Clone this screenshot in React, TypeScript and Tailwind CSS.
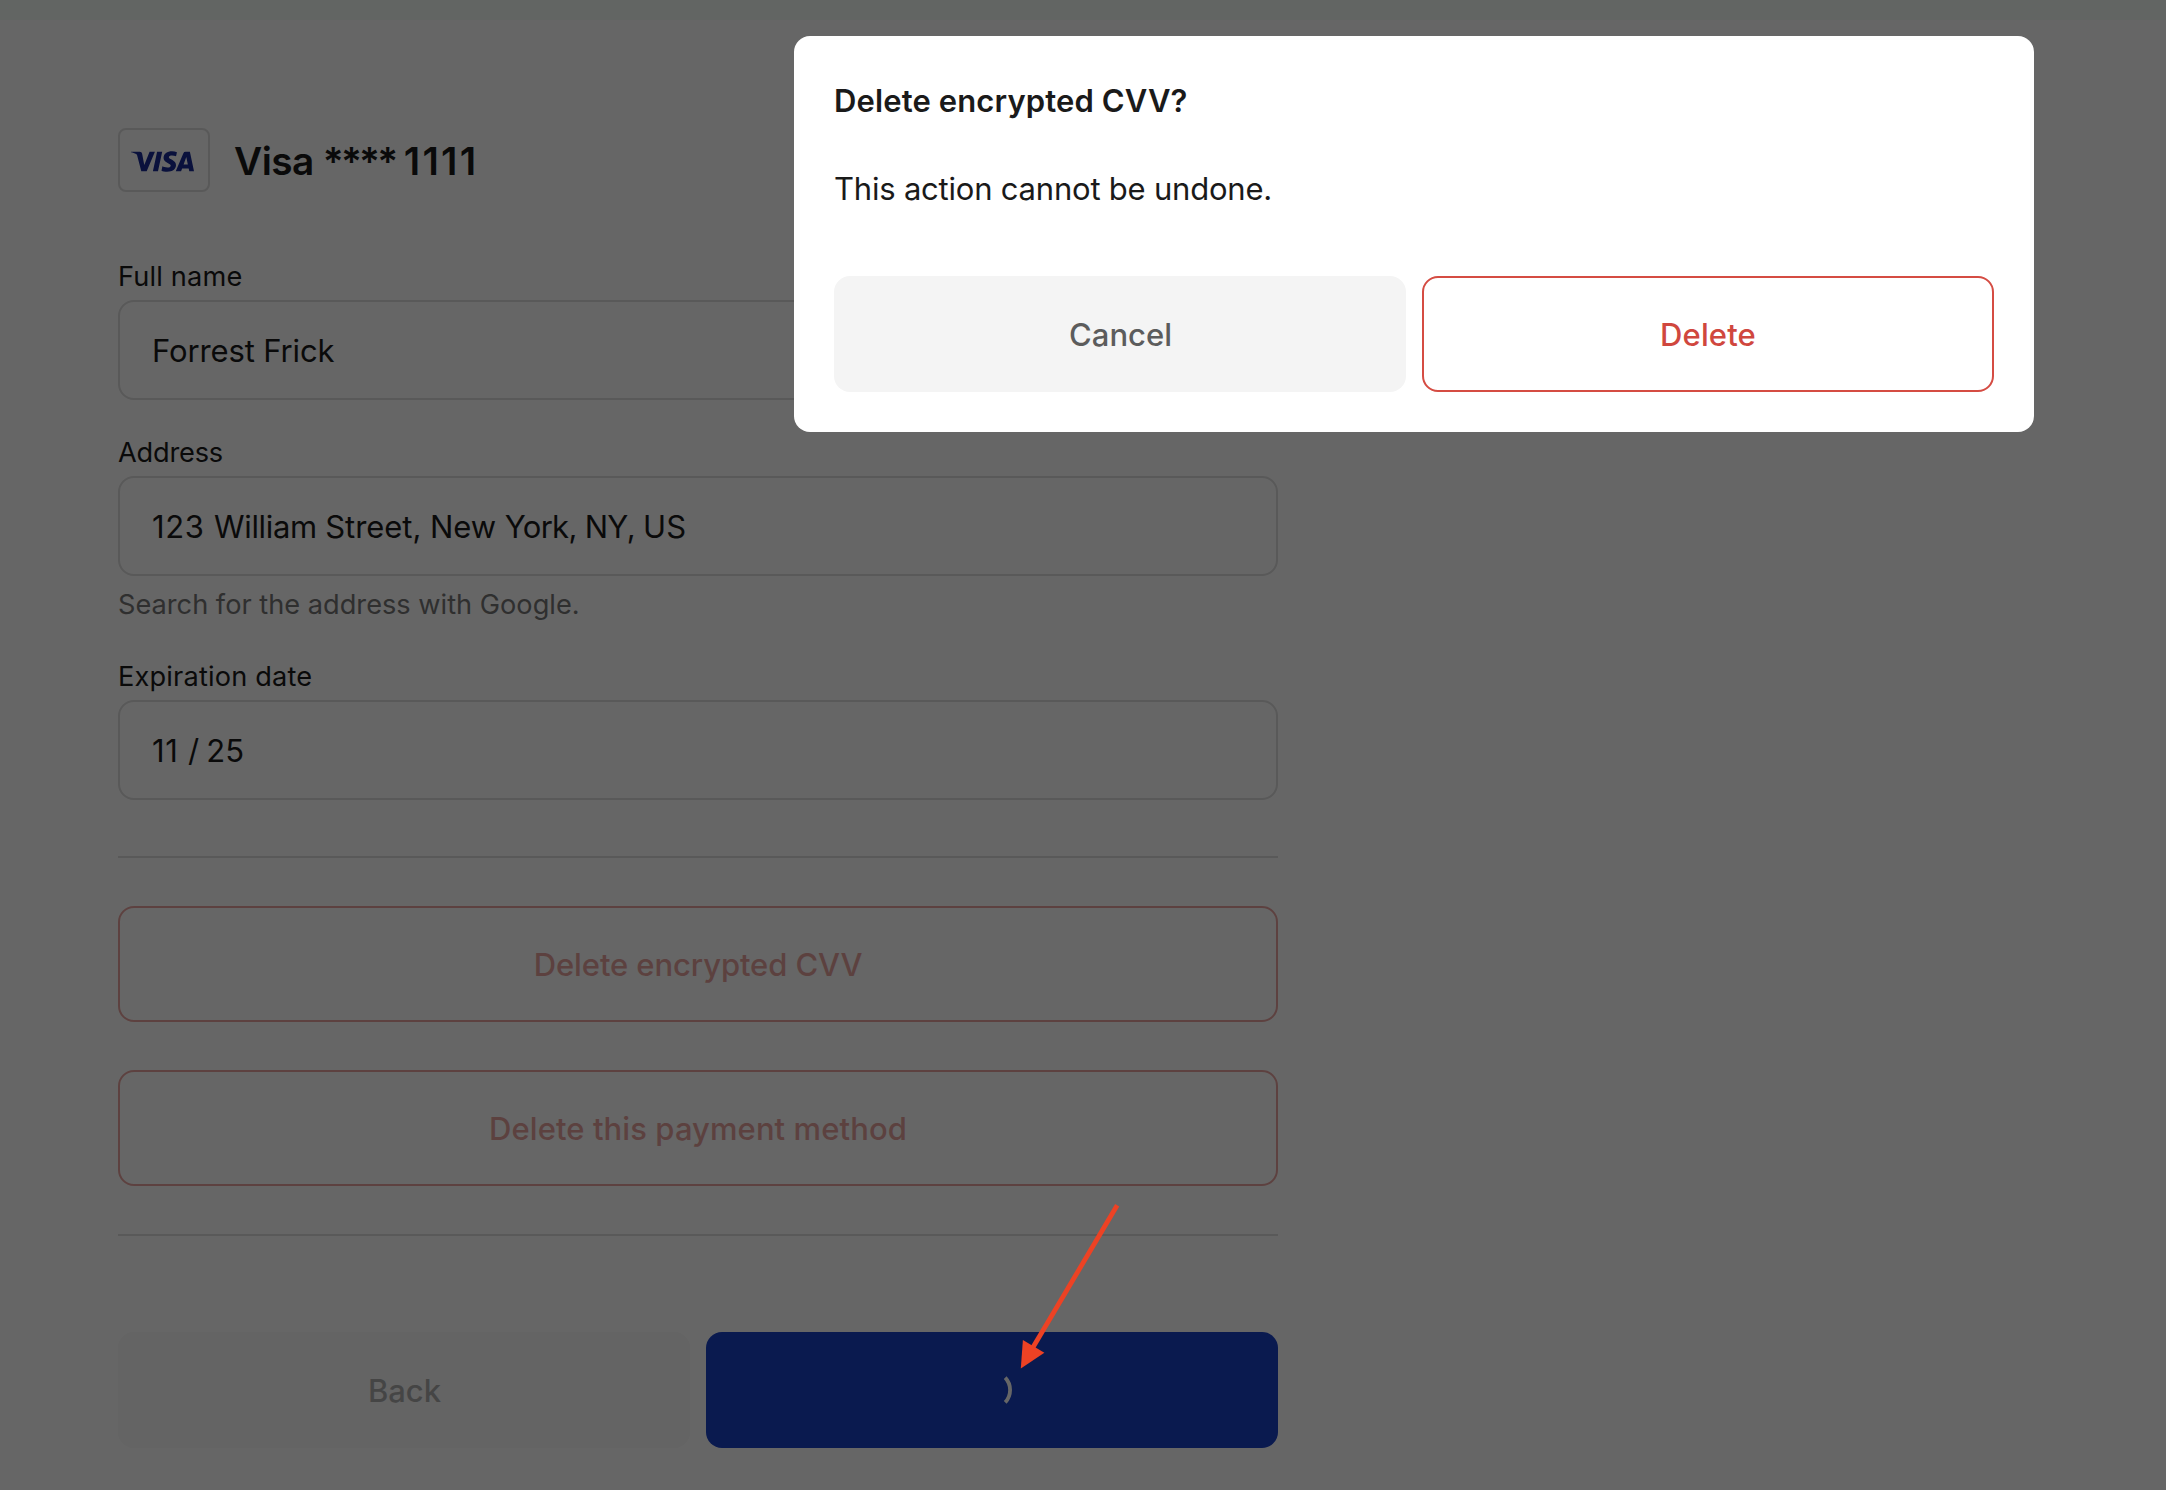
import type { ReactNode } from "react";
import { SiVisa } from "react-icons/si";

interface FieldProps {
  label: string;
  labelClass: string;
  hint?: string;
  children: ReactNode;
}

function Field({ label, labelClass, hint, children }: FieldProps) {
  return (
    <div className="flex flex-col">
      <label className="h-10 pt-px text-[27.2px] leading-10 text-[#1a1a1a]">
        <span className={labelClass}>{label}</span>
      </label>
      <div className="mt-1 flex h-[100px] items-center rounded-2xl border-2 border-[#dedede] bg-white px-8 pt-0.5 text-[31px] leading-10 text-[#1a1a1a]">
        {children}
      </div>
      {hint && <p className="mt-2 h-10 pt-px text-[27.2px] leading-10 text-[#767676]">{hint}</p>}
    </div>
  );
}

function DangerButton({ children, className }: { children: string; className: string }) {
  return (
    <button className="flex h-[116px] w-full items-center justify-center rounded-2xl border-2 border-[#d54c43] bg-white pt-0.5 text-[31px] leading-10 font-medium text-[#d0473e] opacity-50">
      <span className={className}>{children}</span>
    </button>
  );
}

function Spinner() {
  return (
    <svg className="size-11" viewBox="-22 -22 44 44" fill="none">
      <path d="M13.2 -12.4A18.2 18.2 0 0 1 13.2 12.4" stroke="#fff" strokeWidth="3.8" />
    </svg>
  );
}

export default function App() {
  return (
    <div className="relative h-[1490px] w-[2166px] overflow-hidden bg-white font-[Inter,'Liberation_Sans',sans-serif]">
      <div className="h-5 bg-[#f5fcf8]" />
      <main className="ml-[118px] flex w-[1160px] flex-col pt-[108px]">
        <header className="flex h-16 items-center gap-6">
          <div className="flex h-16 w-[92px] items-center justify-center rounded-lg border-2 border-[#dedede]">
            <SiVisa className="mt-0.5 mr-[3px] size-[63px] text-[#192c96]" />
          </div>
          <h1 className="pt-0.5 text-[38.8px] leading-[56px] font-semibold tracking-[-0.6px] text-[#1a1a1a]">
            Visa <span className="tracking-[-2.75px]">****</span> <span className="-ml-px tracking-[2.3px]">1111</span>
          </h1>
        </header>

        <div className="mt-16 flex flex-col gap-8">
          <Field label="Full name" labelClass="tracking-[0.17px]">
            <span className="tracking-[-0.13px]">Forrest Frick</span>
          </Field>
          <Field label="Address" labelClass="tracking-[-0.2px]" hint="Search for the address with Google.">
            <span>
              <span className="tracking-[0.65px]">123 </span>
              <span className="tracking-[-0.33px]">William </span>
              <span className="tracking-[-0.04px]">Street, New </span>
              <span className="tracking-[-0.7px]">York, NY, </span>
              <span className="tracking-[0.4px]">US</span>
            </span>
          </Field>
          <Field label="Expiration date" labelClass="tracking-[0.17px]">
            <span>
              <span className="tracking-[0.7px]">11 </span>
              <span className="tracking-[-0.9px]">/ </span>
              <span className="tracking-[0.2px]">25</span>
            </span>
          </Field>
        </div>

        <hr className="mt-14 border-t-2 border-[#dedede]" />
        <div className="mt-12 flex flex-col gap-12">
          <DangerButton className="tracking-[-0.1px]">Delete encrypted CVV</DangerButton>
          <DangerButton className="tracking-[0.08px]">Delete this payment method</DangerButton>
        </div>
        <hr className="mt-12 border-t-2 border-[#dedede]" />

        <div className="mt-24 grid grid-cols-2 gap-4">
          <button className="flex h-[116px] items-center justify-center rounded-2xl bg-[#f4f4f4] pt-0.5 pl-px text-[31px] leading-10 font-medium text-[#5c5c5c] opacity-50">
            Back
          </button>
          <button className="flex h-[116px] items-center justify-center rounded-2xl bg-[#1941c6]">
            <Spinner />
          </button>
        </div>
      </main>

      <div className="absolute inset-0 bg-black/60" />

      <div role="dialog" className="absolute top-9 left-[794px] flex w-[1240px] flex-col rounded-2xl bg-white p-10 text-[#1a1a1a]">
        <h2 className="h-12 pt-px text-[31px] leading-12 font-semibold tracking-[0.12px]">Delete encrypted CVV?</h2>
        <p className="mt-10 h-12 pt-px text-[31px] leading-12 tracking-[-0.21px]">This action cannot be undone.</p>
        <div className="mt-16 grid grid-cols-2 gap-4 text-[31px] leading-10 font-medium">
          <button className="flex h-[116px] items-center justify-center rounded-2xl bg-[#f4f4f4] pt-0.5 pl-px text-[#5c5c5c]">
            Cancel
          </button>
          <button className="flex h-[116px] items-center justify-center rounded-2xl border-2 border-[#d54c43] pt-0.5 text-[#d0473e]">
            <span className="tracking-[0.15px]">Delete</span>
          </button>
        </div>
      </div>

      {/* Callout arrow pointing at the loading button */}
      <svg className="absolute top-[1200px] left-[1010px] h-[180px] w-[120px]" viewBox="1010 1200 120 180">
        <path d="M1117.2 1205.2L1032 1349" stroke="#ed4224" strokeWidth="4.8" />
        <path d="M1020.8 1368.4L1022.9 1340L1044.4 1352.8Z" fill="#ed4224" />
      </svg>
    </div>
  );
}
